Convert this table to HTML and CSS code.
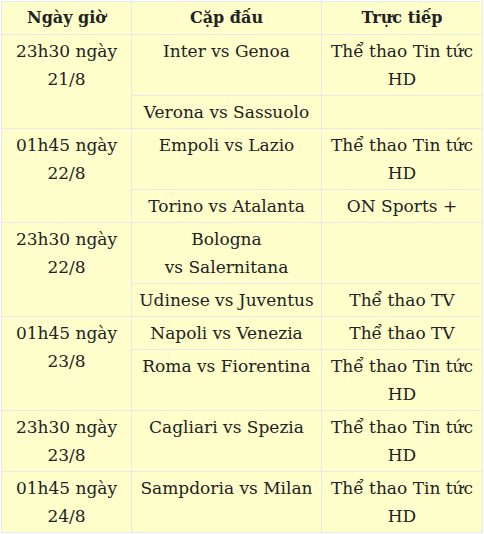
FILE: index.html
```html
<!DOCTYPE html>
<html lang="vi">
<head>
<meta charset="utf-8">
<link rel="stylesheet" href="styles.css">
</head>
<body>
<table class="schedule">
  <colgroup><col class="c-time"><col class="c-match"><col class="c-tv"></colgroup>
  <thead>
    <tr><th>Ngày giờ</th><th>Cặp đấu</th><th>Trực tiếp</th></tr>
  </thead>
  <tbody>
    <tr><td rowspan="2">23h30 ngày<br>21/8</td><td>Inter vs Genoa</td><td>Thể thao Tin tức<br>HD</td></tr>
    <tr><td>Verona vs Sassuolo</td><td></td></tr>
    <tr><td rowspan="2">01h45 ngày<br>22/8</td><td>Empoli vs Lazio</td><td>Thể thao Tin tức<br>HD</td></tr>
    <tr><td>Torino vs Atalanta</td><td>ON Sports +</td></tr>
    <tr><td rowspan="2">23h30 ngày<br>22/8</td><td>Bologna<br>vs Salernitana</td><td></td></tr>
    <tr><td>Udinese vs Juventus</td><td>Thể thao TV</td></tr>
    <tr><td rowspan="2">01h45 ngày<br>23/8</td><td>Napoli vs Venezia</td><td>Thể thao TV</td></tr>
    <tr><td>Roma vs Fiorentina</td><td>Thể thao Tin tức<br>HD</td></tr>
    <tr><td>23h30 ngày<br>23/8</td><td>Cagliari vs Spezia</td><td>Thể thao Tin tức<br>HD</td></tr>
    <tr><td>01h45 ngày<br>24/8</td><td>Sampdoria vs Milan</td><td>Thể thao Tin tức<br>HD</td></tr>
  </tbody>
</table>
</body>
</html>
```
FILE: styles.css
```css
html, body {
  margin: 0;
  padding: 0;
  background: #ffffff;
}
body {
  padding: 1px;
  font-family: "DejaVu Serif", "Liberation Serif", serif;
  color: #222222;
}
.schedule {
  border-collapse: collapse;
  width: 481px;
  table-layout: fixed;
  background: #ffffcc;
  font-size: 17px;
  line-height: 28px;
}
.schedule th,
.schedule td {
  box-sizing: border-box;
  border: 1px solid #e8e8e8;
  padding: 2px 4px;
  text-align: center;
  vertical-align: top;
  white-space: nowrap;
  overflow: hidden;
}
.schedule th {
  font-weight: bold;
  font-size: 16px;
}
.c-time { width: 130px; }
.c-match { width: 190px; }
.c-tv { width: 161px; }
```
